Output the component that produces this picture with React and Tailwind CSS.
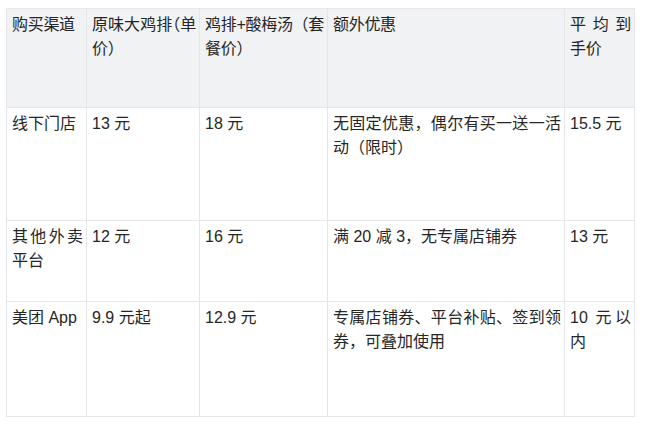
export default function App() {
  const rows = [
    ["线下门店", "13 元", "18 元", "无固定优惠，偶尔有买一送一活动（限时）", "15.5 元"],
    ["其他外卖平台", "12 元", "16 元", "满 20 减 3，无专属店铺券", "13 元"],
    ["美团 App", "9.9 元起", "12.9 元", "专属店铺券、平台补贴、签到领券，可叠加使用", "10 元以内"],
  ];
  const heights = ["h-[113px]", "h-[81px]", "h-[115px]"];
  const widths = ["w-[80px]", "w-[113px]", "w-[128px]", "w-[237px]", "w-[70px]"];
  const cell = "border border-[#e5e6e9] pl-[5px] pr-[3px] pt-[4px] align-top text-justify break-all";
  const headers = [
    { t: "购买渠道", c: "" },
    { t: "原味大鸡排（单价）", c: "[font-feature-settings:'halt']" },
    { t: "鸡排+酸梅汤（套餐价）", c: "" },
    { t: "额外优惠", c: "" },
    { t: "平均到手价", c: "" },
  ];
  return (
    <div
      className="w-[650px] h-[426px] bg-white pt-[8px] pl-[6px] text-[#262626] text-[16px] leading-[24px]"
      style={{ fontFamily: '"Liberation Sans", "Noto Sans CJK SC", sans-serif' }}
    >
      <table className="border-collapse table-fixed w-[628px]">
        <colgroup>
          {widths.map((w, i) => (
            <col key={i} className={w} />
          ))}
        </colgroup>
        <thead>
          <tr className="h-[99px] bg-[#f1f2f4]">
            {headers.map((h, i) => (
              <th key={i} className={cell + " font-normal tracking-[-0.3px] " + h.c}>
                {h.t}
              </th>
            ))}
          </tr>
        </thead>
        <tbody>
          {rows.map((r, ri) => (
            <tr key={ri} className={heights[ri]}>
              {r.map((c, ci) => (
                <td key={ci} className={cell}>
                  {c}
                </td>
              ))}
            </tr>
          ))}
        </tbody>
      </table>
    </div>
  );
}
